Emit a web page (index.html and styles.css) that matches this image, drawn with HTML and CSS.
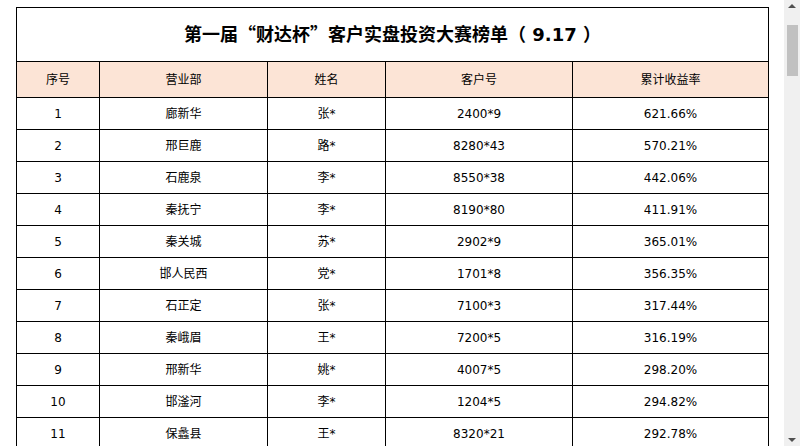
FILE: index.html
```html
<!DOCTYPE html>
<html lang="zh-CN">
<head>
<meta charset="utf-8">
<title>第一届“财达杯”客户实盘投资大赛榜单</title>
<link rel="stylesheet" href="styles.css">
</head>
<body>
<div class="window">
  <div class="viewport">
    <table class="rank">
      <colgroup>
        <col class="c1"><col class="c2"><col class="c3"><col class="c4"><col class="c5">
      </colgroup>
      <tr class="title-row"><td colspan="5">第一届“财达杯”客户实盘投资大赛榜单（<span class="num">&nbsp;9.17&nbsp;</span>）</td></tr>
      <tr class="head-row"><td>序号</td><td>营业部</td><td>姓名</td><td>客户号</td><td>累计收益率</td></tr>
      <tr><td>1</td><td>廊新华</td><td>张*</td><td>2400*9</td><td>621.66%</td></tr>
      <tr><td>2</td><td>邢巨鹿</td><td>路*</td><td>8280*43</td><td>570.21%</td></tr>
      <tr><td>3</td><td>石鹿泉</td><td>李*</td><td>8550*38</td><td>442.06%</td></tr>
      <tr><td>4</td><td>秦抚宁</td><td>李*</td><td>8190*80</td><td>411.91%</td></tr>
      <tr><td>5</td><td>秦关城</td><td>苏*</td><td>2902*9</td><td>365.01%</td></tr>
      <tr><td>6</td><td>邯人民西</td><td>党*</td><td>1701*8</td><td>356.35%</td></tr>
      <tr><td>7</td><td>石正定</td><td>张*</td><td>7100*3</td><td>317.44%</td></tr>
      <tr><td>8</td><td>秦峨眉</td><td>王*</td><td>7200*5</td><td>316.19%</td></tr>
      <tr><td>9</td><td>邢新华</td><td>姚*</td><td>4007*5</td><td>298.20%</td></tr>
      <tr><td>10</td><td>邯滏河</td><td>李*</td><td>1204*5</td><td>294.82%</td></tr>
      <tr><td>11</td><td>保蠡县</td><td>王*</td><td>8320*21</td><td>292.78%</td></tr>
    </table>
  </div>
  <div class="scrollbar">
    <div class="arrow up"></div>
    <div class="track"><div class="thumb"></div></div>
    <div class="arrow down"></div>
  </div>
</div>
</body>
</html>
```
FILE: styles.css
```css
html, body {
  margin: 0;
  padding: 0;
  background: #fff;
}
.window {
  display: flex;
  width: 800px;
  height: 446px;
  overflow: hidden;
}
.viewport {
  width: 784px;
  height: 446px;
  overflow: hidden;
  padding: 7px 16px 0 16px;
  box-sizing: border-box;
}
.rank {
  border-collapse: collapse;
  table-layout: fixed;
  width: 752px;
  font-family: "DejaVu Sans", "Noto Sans CJK SC", sans-serif;
  font-size: 12px;
  color: #000;
}
.c1 { width: 83px; }
.c2 { width: 168px; }
.c3 { width: 118px; }
.c4 { width: 187px; }
.c5 { width: 196px; }
.rank td {
  border: 1px solid #000;
  padding: 0;
  height: 31px;
  text-align: center;
  vertical-align: middle;
  line-height: 16px;
}
.title-row td {
  height: 51px;
  font-family: "Noto Sans CJK SC", sans-serif;
  font-weight: bold;
  font-size: 18px;
  padding-bottom: 2px;
}
.title-row .num {
  font-family: "DejaVu Sans", sans-serif;
}
.head-row td {
  height: 35px;
  background: #fce4d6;
}
.scrollbar {
  width: 16px;
  height: 446px;
  background: #f0f0f0;
  display: flex;
  flex-direction: column;
  align-items: center;
}
.arrow {
  width: 0;
  height: 0;
  border-left: 4px solid transparent;
  border-right: 4px solid transparent;
}
.arrow.up {
  margin-top: 4px;
  border-bottom: 4px solid #505050;
}
.arrow.down {
  margin-bottom: 4px;
  border-top: 4px solid #505050;
}
.track {
  flex: 1;
  width: 100%;
  display: flex;
  justify-content: center;
  padding-top: 17px;
  box-sizing: border-box;
}
.thumb {
  width: 11px;
  height: 51px;
  background: #c1c1c1;
}
```
